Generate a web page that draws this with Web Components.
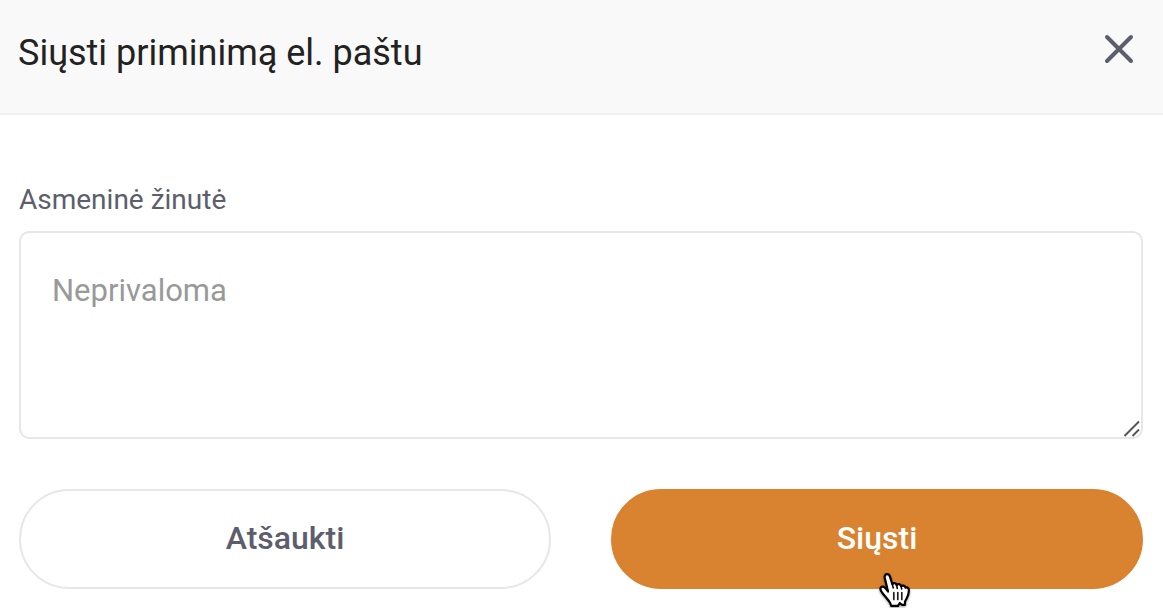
<!DOCTYPE html>
<html lang="lt">
<head>
<meta charset="utf-8">
<meta name="viewport" content="width=device-width, initial-scale=1">
<title>Siųsti priminimą el. paštu</title>
<style>
  body {
    margin: 0;
    background: #fff;
    color: #5c5e6d;
    font-family: Roboto, sans-serif;
  }
</style>
</head>
<body>
<reminder-dialog>
  <span slot="title">Siųsti priminimą el. paštu</span>
  <message-field label="Asmeninė žinutė" placeholder="Neprivaloma"></message-field>
  <pill-button slot="actions">Atšaukti</pill-button>
  <pill-button slot="actions" primary>Siųsti<hand-cursor slot="pointer"></hand-cursor></pill-button>
</reminder-dialog>

<script>
(() => {

  class ReminderDialog extends HTMLElement {
    constructor() {
      super()
      this.attachShadow({ mode: 'open' })
      this.shadowRoot.innerHTML = `
      <style>
        :host {
          display: block;
        }
        header {
          display: flex;
          align-items: flex-start;
          justify-content: space-between;
          padding: 32px 27px 39px 18px;
          background: #f9f9f9;
          border-bottom: 2px solid #f0f0f0;
        }
        h1 {
          margin: 0;
          color: #222;
          font-size: 36px;
          font-weight: 400;
          line-height: 42px;
        }
        button {
          width: 34px;
          height: 34px;
          padding: 0;
          border: 0;
          background: none;
          color: inherit;
          cursor: pointer;
        }
        svg {
          display: block;
        }
        main {
          padding: 68px 20px 0 19px;
        }
        footer {
          display: grid;
          grid-template-columns: 1fr 1fr;
          gap: 60px;
          padding: 50px 20px 19px 19px;
        }
      </style>
      <section role="dialog" aria-labelledby="title">
        <header>
          <h1 id="title"><slot name="title"></slot></h1>
          <button type="button" aria-label="Uždaryti">
            <svg width="34" height="34" viewBox="0 0 34 34" fill="none" stroke="currentColor" stroke-width="4" stroke-linecap="round">
              <path d="M5 5L29 29M29 5L5 29"/>
            </svg>
          </button>
        </header>
        <main><slot></slot></main>
        <footer><slot name="actions"></slot></footer>
      </section>
      `
    }
  }
  customElements.define('reminder-dialog', ReminderDialog)

  class MessageField extends HTMLElement {
    constructor() {
      super()
      this.attachShadow({ mode: 'open' })
      this.shadowRoot.innerHTML = `
      <style>
        :host {
          display: block;
        }
        label {
          display: block;
          margin-bottom: 15px;
          font-size: 28px;
          line-height: 33px;
        }
        .box {
          position: relative;
        }
        textarea {
          display: block;
          box-sizing: border-box;
          width: 100%;
          height: 208px;
          padding: 40px 31px;
          border: 2px solid #e6e6eb;
          border-radius: 10px;
          outline: 0;
          background: #fff;
          color: #222;
          font: 31px/36px Roboto, sans-serif;
          resize: vertical;
        }
        textarea::placeholder {
          color: #999;
          opacity: 1;
        }
        textarea::-webkit-resizer {
          background: transparent;
        }
        /* grip drawn over the corner of the field */
        svg {
          position: absolute;
          right: 2px;
          bottom: 2px;
          pointer-events: none;
        }
      </style>
      <label for="message">${this.getAttribute('label')}</label>
      <div class="box">
        <textarea id="message" placeholder="${this.getAttribute('placeholder')}"></textarea>
        <svg width="18" height="18" viewBox="0 0 18 18" fill="none" stroke="#555" stroke-width="2">
          <path d="M1.500 17L16 2.500M9.500 17L16 10.500"/>
        </svg>
      </div>
      `
    }
  }
  customElements.define('message-field', MessageField)

  class PillButton extends HTMLElement {
    constructor() {
      super()
      this.attachShadow({ mode: 'open' })
      this.shadowRoot.innerHTML = `
      <style>
        :host {
          display: block;
          position: relative;
        }
        button {
          display: block;
          box-sizing: border-box;
          width: 100%;
          padding: 28px 32px 30px;
          border: 2px solid #e6e6eb;
          border-radius: 50px;
          background: #fff;
          color: inherit;
          font: 500 32px/38px Roboto, sans-serif;
          cursor: pointer;
        }
        :host([primary]) button {
          border-color: #d9822f;
          background: #d9822f;
          color: #fff;
        }
        slot[name=pointer] {
          display: block;
          position: absolute;
          top: 83px;
          left: 50%;
          pointer-events: none;
        }
      </style>
      <button type="button"><slot></slot></button>
      <slot name="pointer"></slot>
      `
    }
  }
  customElements.define('pill-button', PillButton)

  class HandCursor extends HTMLElement {
    constructor() {
      super()
      this.attachShadow({ mode: 'open' })
      this.shadowRoot.innerHTML = `
      <style>
        :host {
          display: block;
        }
        svg {
          display: block;
          filter: drop-shadow(0 1px 1px rgba(0, 0, 0, .4));
        }
      </style>
      <svg width="36" height="36" viewBox="0 0 36 36" aria-hidden="true">
        <path d="M11 19.500L7.800 6C7.300 3.500 8.500 2.200 10 2.200C11.600 2.200 12.600 3.200 13.100 4.800L15.300 12.200C16 10.700 18.800 10.800 19.600 13C20.700 11.500 23.600 11.800 24.200 14.300C25.400 13 28 13.300 28.600 15.700C30.300 14.800 32 16 31.900 18.500C31.800 21.500 31.200 23.500 29.900 26L28 29.500V32.800H24.800L22.800 31L21 33.800H14.200L13.200 31C11 27.500 8.500 25 5 20.500C3 17.500 2.800 15.600 4.700 14.800C7 14 9.300 17 11 19.500Z" fill="#fff" stroke="#000" stroke-width="2.200" stroke-linejoin="round"/>
        <path d="M15.300 12.200L16.300 16M19.600 13L20.300 16.500M24.200 14.300L24.700 17" fill="none" stroke="#000" stroke-width="1.500" stroke-linecap="round"/>
        <path d="M16.800 20.500V27.500M20.800 20.500V27.500M24.800 20.500V27.500" fill="none" stroke="#222" stroke-width="1.700" stroke-linecap="round"/>
      </svg>
      `
    }
  }
  customElements.define('hand-cursor', HandCursor)

})()
</script>
</body>
</html>
